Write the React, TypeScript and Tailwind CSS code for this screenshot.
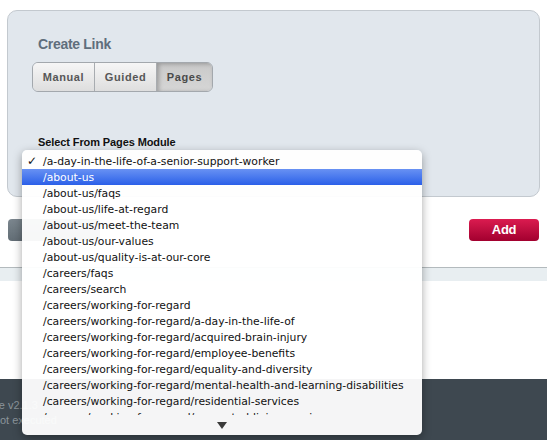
import React from "react";

const pages = [
  "/a-day-in-the-life-of-a-senior-support-worker",
  "/about-us",
  "/about-us/faqs",
  "/about-us/life-at-regard",
  "/about-us/meet-the-team",
  "/about-us/our-values",
  "/about-us/quality-is-at-our-core",
  "/careers/faqs",
  "/careers/search",
  "/careers/working-for-regard",
  "/careers/working-for-regard/a-day-in-the-life-of",
  "/careers/working-for-regard/acquired-brain-injury",
  "/careers/working-for-regard/employee-benefits",
  "/careers/working-for-regard/equality-and-diversity",
  "/careers/working-for-regard/mental-health-and-learning-disabilities",
  "/careers/working-for-regard/residential-services",
  "/careers/working-for-regard/supported-living-services",
];

const selected = 0;
const hovered = 1;

export default function App() {
  return (
    <div className="relative w-[547px] h-[440px] overflow-hidden bg-white font-['Liberation_Sans',Arial,sans-serif]">
      {/* Create link panel */}
      <div className="px-[7px] pt-[10px]">
        <div className="h-[187px] rounded-[10px] border border-[#c3c9cf] bg-[#e1e7ed] pl-[24px] pt-[24px]">
          <h2 className="ml-[6px] text-[14px] leading-[18px] font-bold tracking-[-0.3px] text-[#5f6e7c]">
            Create Link
          </h2>
          <div className="mt-[9px] flex h-[30px] w-[181px] overflow-hidden rounded-[6px] border border-[#a3a8ad] text-[11px] font-bold tracking-[0.6px]">
            <button className="w-[62px] border-r border-[#a8acb0] bg-gradient-to-b from-[#f6f6f6] to-[#dedede] text-[#575757]">
              Manual
            </button>
            <button className="w-[62px] border-r border-[#a8acb0] bg-gradient-to-b from-[#f6f6f6] to-[#dedede] text-[#575757]">
              Guided
            </button>
            <button className="flex-1 bg-gradient-to-b from-[#c9c9c9] to-[#d6d6d6] text-[#4a4a4a] shadow-[inset_2px_1px_4px_rgba(0,0,0,0.25)]">
              Pages
            </button>
          </div>
          <p className="ml-[6px] mt-[43px] text-[11px] leading-[14px] font-bold tracking-[-0.1px] text-[#111]">
            Select From Pages Module
          </p>
        </div>
      </div>

      {/* Action row */}
      <div className="mt-[22px] flex justify-between px-[8px]">
        <button className="h-[22px] w-[92px] rounded-[4px] bg-gradient-to-b from-[#7b868e] to-[#626d75]" />
        <button className="h-[22px] w-[70px] rounded-[4px] bg-gradient-to-b from-[#db1b50] to-[#a2002f] text-[13px] font-bold text-white tracking-[-0.3px]">
          Add
        </button>
      </div>

      <div className="mt-[26px] h-[14px] border-t border-[#b3babd] bg-[#e8eef1]" />

      {/* Footer */}
      <div className="absolute bottom-0 left-0 right-0 h-[61px] bg-[#3e4850] pt-[19px] text-[11px] leading-[15px] text-[#8b949a]">
        <p className="-ml-[19px]">Core v2.1.3</p>
        <p className="-ml-[8px]">Not executed</p>
      </div>

      {/* Open select menu */}
      <div className="absolute left-[22px] top-[150px] w-[400px] h-[285px] rounded-[5px] bg-white/95 shadow-[0_3px_10px_rgba(0,0,0,0.35)] font-['DejaVu_Sans',sans-serif] text-[10.8px] text-[#111]">
        <ul className="h-[265px] overflow-hidden pt-[3px]">
          {pages.map((p, i) => (
            <li
              key={p}
              className={`relative h-[16px] pl-[21px] leading-[17px] whitespace-nowrap ${
                i === hovered ? "bg-gradient-to-b from-[#6891f3] to-[#2b5fe8] text-white" : ""
              }`}
            >
              {i === selected && (
                <span className="absolute left-[5px] top-0 text-[12px] font-bold">✓</span>
              )}
              {p}
            </li>
          ))}
        </ul>
        <div className="flex h-[20px] items-center justify-center">
          <svg width="10" height="7" viewBox="0 0 10 7">
            <path d="M0 0 H10 L5 7 Z" fill="#3a3a3a" />
          </svg>
        </div>
      </div>
    </div>
  );
}
